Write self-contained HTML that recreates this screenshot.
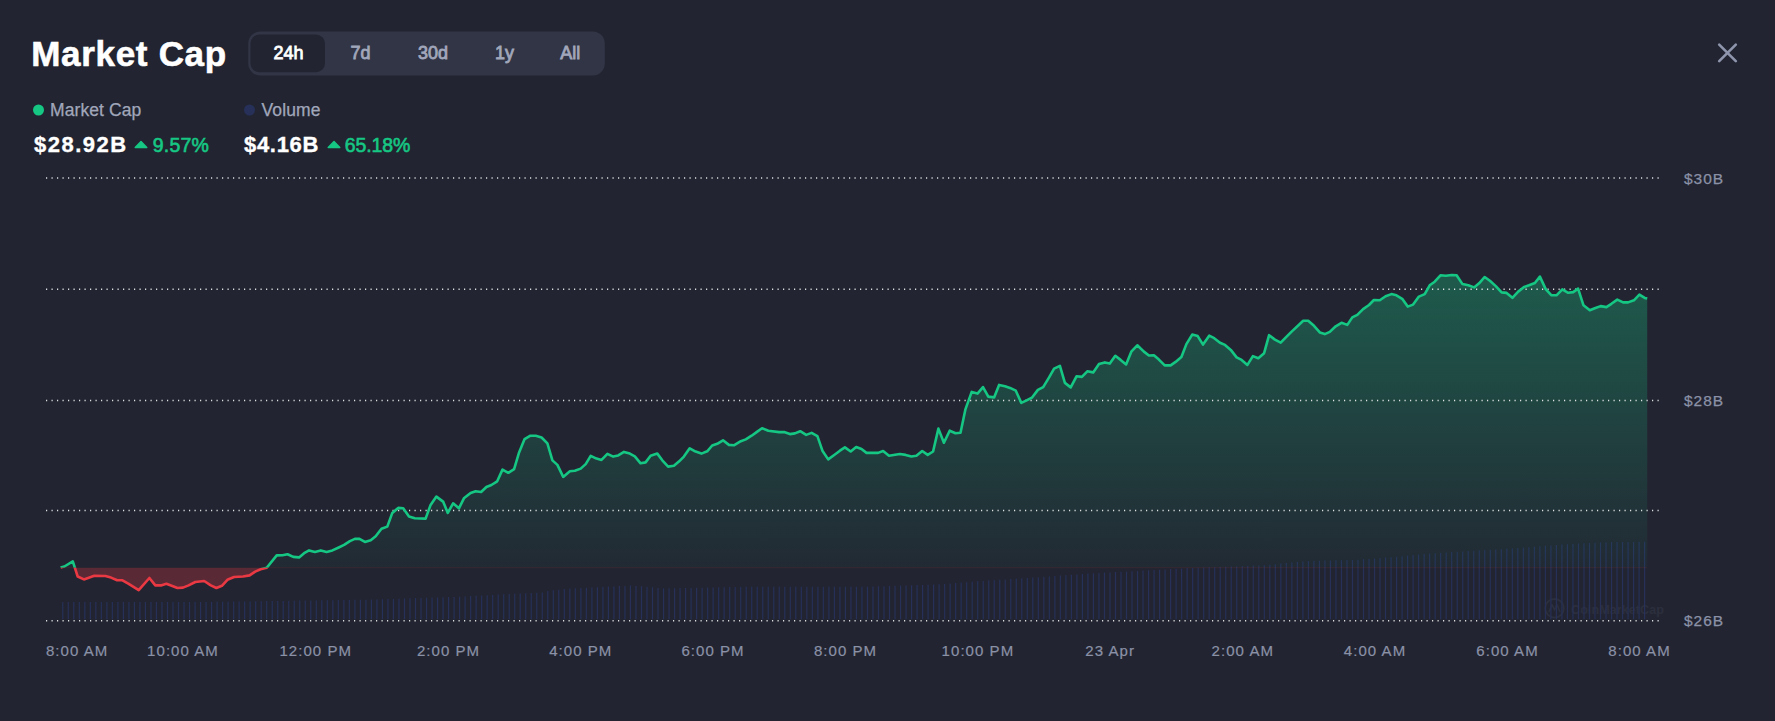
<!DOCTYPE html>
<html><head><meta charset="utf-8">
<style>
html,body{margin:0;padding:0;}
body{width:1775px;height:721px;background:#222531;position:relative;overflow:hidden;font-family:"Liberation Sans", sans-serif;}
svg{position:absolute;left:0;top:0;font-family:"Liberation Sans", sans-serif;}
</style></head><body>
<svg width="1775" height="721" viewBox="0 0 1775 721">
<defs>
<linearGradient id="gg" x1="0" y1="275" x2="0" y2="567.8" gradientUnits="userSpaceOnUse">
<stop offset="0" stop-color="#16c784" stop-opacity="0.33"/>
<stop offset="1" stop-color="#16c784" stop-opacity="0.03"/>
</linearGradient>
<clipPath id="above"><rect x="0" y="0" width="1775" height="567.8"/></clipPath>
<clipPath id="below"><rect x="0" y="567.8" width="1775" height="300"/></clipPath>
</defs>
<text x="31.2" y="66" font-size="35" font-weight="bold" fill="#fff" stroke="#fff" stroke-width="0.6" letter-spacing="0.7">Market Cap</text>
<rect x="248.3" y="31.6" width="356.5" height="44" rx="12" fill="#323546"/>
<rect x="250.4" y="34.6" width="74.6" height="37.6" rx="9" fill="#222531"/>
<g font-size="18" font-weight="normal" fill="#a1a7bb" stroke="#a1a7bb" stroke-width="0.8" text-anchor="middle">
<text x="288.6" y="59" fill="#fff" stroke="#fff">24h</text>
<text x="360.5" y="59">7d</text>
<text x="433" y="59">30d</text>
<text x="504.4" y="59">1y</text>
<text x="570.2" y="59">All</text>
</g>
<path d="M1719.2,44.6 L1735.8,61.2 M1735.8,44.6 L1719.2,61.2" stroke="#8e95ad" stroke-width="2.6" stroke-linecap="round"/>
<circle cx="38.5" cy="110" r="5.5" fill="#16c784"/>
<circle cx="249.5" cy="110" r="5.5" fill="#263058"/>
<g font-size="17.5" fill="#a1a7bb" stroke="#a1a7bb" stroke-width="0.25" letter-spacing="0.1">
<text x="50" y="115.5">Market Cap</text>
<text x="261.5" y="115.5">Volume</text>
</g>
<g font-size="22" font-weight="bold" fill="#fff" stroke="#fff" stroke-width="0.35" letter-spacing="1">
<text x="34" y="152" letter-spacing="1.5">$28.92B</text>
<text x="244" y="152" letter-spacing="0.7">$4.16B</text>
</g>
<g font-size="19.5" font-weight="normal" fill="#16c784" stroke="#16c784" stroke-width="0.6" letter-spacing="0.2">
<text x="152.8" y="152.2">9.57%</text>
<text x="344.8" y="152.2" letter-spacing="-0.1">65.18%</text>
</g>
<path d="M135.2,147.6 L141,141.4 L146.8,147.6 Z" fill="#16c784" stroke="#16c784" stroke-width="1.4" stroke-linejoin="round"/>
<path d="M328.2,147.6 L334,141.4 L339.8,147.6 Z" fill="#16c784" stroke="#16c784" stroke-width="1.4" stroke-linejoin="round"/>
<g opacity="1">
<circle cx="1554.5" cy="608.3" r="9.3" fill="none" stroke="#2c2f3d" stroke-width="1.8"/>
<path d="M1549,612 L1552,604.5 L1554.5,610 L1557,604.5 L1560,612" fill="none" stroke="#2c2f3d" stroke-width="1.6" stroke-linejoin="round"/>
<text x="1571" y="613.7" font-size="12.5" font-weight="bold" fill="#2c2f3d" letter-spacing="0.1">CoinMarketCap</text>
</g>
<path d="M62.77,619.3V602.0M68.28,619.3V602.0M73.79,619.3V602.0M79.30,619.3V602.0M84.82,619.3V602.0M90.33,619.3V602.0M95.84,619.3V602.0M101.35,619.3V602.0M106.86,619.3V602.0M112.37,619.3V602.0M117.89,619.3V602.0M123.40,619.3V602.0M128.91,619.3V602.0M134.42,619.3V602.0M139.93,619.3V602.0M145.44,619.3V602.0M150.96,619.3V602.0M156.47,619.3V602.0M161.98,619.3V602.0M167.49,619.3V602.0M173.00,619.3V602.0M178.51,619.3V602.0M184.03,619.3V602.0M189.54,619.3V602.0M195.05,619.3V602.0M200.56,619.3V602.0M206.07,619.3V602.0M211.58,619.3V601.9M217.09,619.3V601.8M222.61,619.3V601.8M228.12,619.3V601.7M233.63,619.3V601.6M239.14,619.3V601.5M244.65,619.3V601.4M250.16,619.3V601.4M255.68,619.3V601.3M261.19,619.3V601.2M266.70,619.3V601.1M272.21,619.3V601.0M277.72,619.3V601.0M283.23,619.3V600.9M288.75,619.3V600.8M294.26,619.3V600.7M299.77,619.3V600.6M305.28,619.3V600.6M310.79,619.3V600.5M316.30,619.3V600.4M321.82,619.3V600.3M327.33,619.3V600.2M332.84,619.3V600.2M338.35,619.3V600.1M343.86,619.3V600.0M349.37,619.3V599.9M354.88,619.3V599.8M360.40,619.3V599.8M365.91,619.3V599.7M371.42,619.3V599.6M376.93,619.3V599.4M382.44,619.3V599.2M387.95,619.3V599.0M393.47,619.3V598.9M398.98,619.3V598.7M404.49,619.3V598.5M410.00,619.3V598.3M415.51,619.3V598.1M421.02,619.3V597.9M426.54,619.3V597.8M432.05,619.3V597.6M437.56,619.3V597.4M443.07,619.3V597.2M448.58,619.3V597.0M454.09,619.3V596.9M459.61,619.3V596.7M465.12,619.3V596.4M470.63,619.3V596.1M476.14,619.3V595.8M481.65,619.3V595.5M487.16,619.3V595.2M492.68,619.3V594.9M498.19,619.3V594.6M503.70,619.3V594.3M509.21,619.3V594.1M514.72,619.3V593.8M520.23,619.3V593.5M525.74,619.3V593.2M531.26,619.3V593.0M536.77,619.3V592.7M542.28,619.3V592.4M547.79,619.3V590.9M553.30,619.3V590.3M558.81,619.3V589.7M564.33,619.3V589.1M569.84,619.3V588.5M575.35,619.3V588.2M580.86,619.3V587.9M586.37,619.3V587.7M591.88,619.3V587.4M597.40,619.3V587.2M602.91,619.3V586.9M608.42,619.3V586.6M613.93,619.3V586.4M619.44,619.3V586.1M624.95,619.3V585.9M630.47,619.3V585.6M635.98,619.3V586.0M641.49,619.3V586.3M647.00,619.3V586.8M652.51,619.3V587.3M658.02,619.3V587.9M663.53,619.3V588.4M669.05,619.3V588.3M674.56,619.3V588.2M680.07,619.3V588.1M685.58,619.3V588.0M691.09,619.3V587.9M696.60,619.3V587.8M702.12,619.3V587.7M707.63,619.3V587.5M713.14,619.3V587.4M718.65,619.3V587.3M724.16,619.3V587.2M729.67,619.3V587.1M735.19,619.3V587.0M740.70,619.3V586.9M746.21,619.3V586.8M751.72,619.3V586.7M757.23,619.3V586.7M762.74,619.3V586.7M768.26,619.3V586.7M773.77,619.3V586.7M779.28,619.3V586.7M784.79,619.3V586.7M790.30,619.3V586.7M795.81,619.3V586.7M801.32,619.3V586.7M806.84,619.3V586.7M812.35,619.3V586.7M817.86,619.3V586.7M823.37,619.3V586.7M828.88,619.3V586.7M834.39,619.3V586.7M839.91,619.3V586.7M845.42,619.3V586.7M850.93,619.3V586.7M856.44,619.3V586.7M861.95,619.3V586.7M867.46,619.3V586.7M872.98,619.3V586.5M878.49,619.3V586.3M884.00,619.3V586.2M889.51,619.3V586.0M895.02,619.3V585.8M900.53,619.3V585.6M906.05,619.3V585.4M911.56,619.3V585.3M917.07,619.3V585.1M922.58,619.3V584.9M928.09,619.3V584.7M933.60,619.3V584.5M939.11,619.3V584.3M944.63,619.3V583.9M950.14,619.3V583.5M955.65,619.3V583.0M961.16,619.3V582.6M966.67,619.3V582.2M972.18,619.3V581.8M977.70,619.3V581.3M983.21,619.3V580.9M988.72,619.3V580.6M994.23,619.3V580.2M999.74,619.3V579.8M1005.25,619.3V579.4M1010.77,619.3V579.1M1016.28,619.3V578.7M1021.79,619.3V578.3M1027.30,619.3V577.9M1032.81,619.3V577.5M1038.32,619.3V577.2M1043.84,619.3V576.8M1049.35,619.3V576.4M1054.86,619.3V576.0M1060.37,619.3V575.6M1065.88,619.3V575.2M1071.39,619.3V574.8M1076.90,619.3V574.4M1082.42,619.3V574.0M1087.93,619.3V573.6M1093.44,619.3V573.2M1098.95,619.3V572.9M1104.46,619.3V572.6M1109.97,619.3V572.4M1115.49,619.3V572.1M1121.00,619.3V571.8M1126.51,619.3V571.5M1132.02,619.3V571.2M1137.53,619.3V570.9M1143.04,619.3V570.6M1148.56,619.3V570.3M1154.07,619.3V570.0M1159.58,619.3V569.7M1165.09,619.3V569.4M1170.60,619.3V569.1M1176.11,619.3V568.8M1181.63,619.3V568.4M1187.14,619.3V568.1M1192.65,619.3V567.9M1198.16,619.3V567.7M1203.67,619.3V567.5M1209.18,619.3V567.3M1214.69,619.3V567.2M1220.21,619.3V567.0M1225.72,619.3V566.8M1231.23,619.3V566.6M1236.74,619.3V566.4M1242.25,619.3V566.1M1247.76,619.3V565.9M1253.28,619.3V565.6M1258.79,619.3V565.4M1264.30,619.3V565.2M1269.81,619.3V564.8M1275.32,619.3V564.2M1280.83,619.3V563.6M1286.35,619.3V563.1M1291.86,619.3V562.5M1297.37,619.3V562.0M1302.88,619.3V561.4M1308.39,619.3V561.0M1313.90,619.3V560.8M1319.42,619.3V560.7M1324.93,619.3V560.6M1330.44,619.3V560.4M1335.95,619.3V560.3M1341.46,619.3V560.2M1346.97,619.3V560.0M1352.49,619.3V559.9M1358.00,619.3V559.7M1363.51,619.3V559.3M1369.02,619.3V558.9M1374.53,619.3V558.4M1380.04,619.3V558.0M1385.55,619.3V557.6M1391.07,619.3V557.2M1396.58,619.3V556.7M1402.09,619.3V556.2M1407.60,619.3V555.6M1413.11,619.3V555.1M1418.62,619.3V554.5M1424.14,619.3V553.9M1429.65,619.3V553.5M1435.16,619.3V553.2M1440.67,619.3V552.8M1446.18,619.3V552.5M1451.69,619.3V552.1M1457.21,619.3V551.8M1462.72,619.3V551.4M1468.23,619.3V551.1M1473.74,619.3V550.7M1479.25,619.3V550.3M1484.76,619.3V550.0M1490.28,619.3V549.7M1495.79,619.3V549.4M1501.30,619.3V549.2M1506.81,619.3V548.8M1512.32,619.3V548.4M1517.83,619.3V548.0M1523.34,619.3V547.6M1528.86,619.3V547.2M1534.37,619.3V546.7M1539.88,619.3V546.3M1545.39,619.3V545.8M1550.90,619.3V545.4M1556.41,619.3V544.9M1561.93,619.3V544.5M1567.44,619.3V544.2M1572.95,619.3V543.9M1578.46,619.3V543.6M1583.97,619.3V543.3M1589.48,619.3V543.0M1595.00,619.3V542.8M1600.51,619.3V542.5M1606.02,619.3V542.2M1611.53,619.3V542.0M1617.04,619.3V542.0M1622.55,619.3V541.9M1628.07,619.3V541.9M1633.58,619.3V541.9M1639.09,619.3V541.8M1644.60,619.3V541.8" stroke="#263058" stroke-width="1.2" fill="none"/>
<path d="M60.6,567.6 L64.4,566.5 L72.8,561.4 L77.7,576.5 L83.9,579.4 L94.3,575.8 L105.4,576.0 L111.0,577.6 L117.2,580.3 L122.5,580.3 L128.7,583.8 L138.7,590.2 L149.4,578.0 L155.3,585.4 L160.9,585.4 L166.4,583.8 L177.5,588.0 L183.0,587.6 L188.6,585.4 L195.3,582.0 L204.2,581.0 L210.8,585.4 L216.4,588.0 L221.9,585.8 L227.4,579.8 L234.1,577.0 L243.0,576.5 L249.6,575.4 L255.2,571.6 L260.7,569.2 L266.7,567.8 L276.7,555.4 L282.5,555.2 L287.5,554.2 L293.3,556.9 L299.1,557.4 L304.1,553.2 L309.1,550.4 L314.9,551.9 L320.8,550.4 L326.6,551.9 L332.4,550.4 L338.2,547.7 L344.1,544.9 L349.9,541.1 L354.9,538.9 L359.0,538.7 L364.9,541.9 L370.7,540.2 L375.7,536.2 L381.5,528.7 L387.3,526.6 L392.3,512.9 L398.2,507.9 L403.2,508.3 L409.0,516.6 L414.8,518.3 L425.6,518.6 L430.6,504.9 L436.4,496.6 L443.1,501.6 L447.8,512.9 L453.1,503.3 L458.9,508.3 L463.9,498.3 L470.6,493.0 L475.6,491.3 L481.1,492.0 L486.4,487.0 L491.4,485.0 L497.2,481.3 L502.5,469.6 L508.3,472.8 L514.1,469.1 L519.1,452.4 L524.6,439.1 L530.0,435.8 L535.8,435.8 L541.6,437.5 L547.4,443.3 L552.4,460.4 L557.4,464.9 L563.2,476.9 L569.9,471.3 L574.9,470.8 L580.7,468.6 L585.7,464.1 L590.7,455.8 L596.5,458.6 L601.5,459.9 L607.4,453.8 L613.2,456.6 L618.2,455.4 L624.0,451.9 L629.8,453.6 L634.8,456.3 L640.6,463.3 L645.6,462.4 L650.6,455.8 L657.3,453.6 L662.3,460.3 L668.1,466.6 L673.9,465.8 L678.9,461.6 L683.9,456.6 L689.7,448.3 L695.6,451.6 L701.4,453.6 L707.2,451.3 L712.2,445.5 L717.2,443.8 L723.0,440.3 L728.9,444.9 L733.9,445.3 L740.8,441.2 L745.8,439.4 L751.6,435.7 L756.6,432.1 L762.0,428.2 L768.3,430.7 L779.1,432.1 L784.1,432.1 L789.9,434.1 L794.9,433.4 L800.2,431.2 L806.2,434.9 L811.6,432.9 L817.4,436.1 L822.4,450.7 L828.2,459.4 L834.9,454.5 L839.9,450.7 L844.9,447.4 L850.7,451.5 L856.2,447.0 L861.5,449.0 L866.5,452.9 L878.1,452.9 L883.1,451.0 L889.0,455.7 L899.8,454.0 L905.6,454.9 L911.4,456.5 L916.4,455.7 L922.2,451.0 L927.7,454.9 L933.1,451.5 L938.4,428.6 L943.9,442.7 L949.7,430.7 L955.5,433.2 L960.5,432.7 L965.5,409.1 L971.7,391.9 L977.5,393.6 L983.0,387.1 L988.3,396.6 L994.1,397.4 L999.1,384.9 L1005.0,386.2 L1010.0,387.9 L1015.8,390.7 L1021.3,402.9 L1026.6,400.4 L1031.9,397.7 L1037.9,389.9 L1043.2,387.1 L1049.1,377.4 L1054.1,368.6 L1059.9,365.9 L1064.9,382.9 L1070.7,387.4 L1076.5,376.3 L1081.9,376.9 L1087.3,371.3 L1093.2,372.4 L1099.0,364.1 L1104.8,362.4 L1109.8,363.6 L1115.3,355.8 L1120.6,359.9 L1126.1,364.4 L1131.5,351.3 L1137.3,345.3 L1143.9,351.6 L1148.9,355.5 L1153.9,355.3 L1158.9,359.6 L1164.7,365.4 L1170.6,365.4 L1175.6,361.9 L1181.4,357.0 L1186.4,344.1 L1192.2,334.6 L1197.7,336.1 L1203.0,344.6 L1209.2,335.7 L1214.2,338.2 L1220.0,342.7 L1225.0,344.9 L1230.8,349.9 L1236.6,357.4 L1241.6,359.9 L1247.4,364.9 L1252.9,356.1 L1258.3,358.2 L1264.1,353.2 L1269.1,335.2 L1274.9,339.6 L1280.7,342.7 L1286.6,336.6 L1291.6,331.6 L1297.4,326.3 L1303.2,320.8 L1308.2,320.8 L1314.0,325.8 L1319.8,332.4 L1324.8,334.1 L1329.8,331.9 L1335.7,326.3 L1341.5,322.8 L1347.3,324.9 L1352.3,317.4 L1357.3,314.9 L1363.1,309.1 L1369.0,305.0 L1373.9,300.0 L1379.8,300.3 L1385.6,296.3 L1391.4,294.1 L1396.4,295.3 L1402.2,298.8 L1407.7,306.6 L1413.1,304.6 L1418.9,296.6 L1424.7,294.1 L1429.7,285.3 L1434.7,281.7 L1440.5,275.3 L1445.8,275.8 L1451.7,275.0 L1456.6,275.3 L1462.5,284.1 L1468.3,285.3 L1474.1,287.4 L1479.1,283.3 L1484.6,277.0 L1489.9,280.8 L1495.8,286.1 L1501.6,292.4 L1506.6,292.9 L1512.4,297.8 L1518.2,291.6 L1524.1,287.0 L1529.0,285.3 L1534.9,283.0 L1539.9,276.6 L1545.7,289.1 L1551.5,295.3 L1556.5,295.3 L1562.3,289.4 L1568.2,292.8 L1573.2,292.1 L1578.1,288.6 L1583.5,305.3 L1589.8,310.3 L1594.8,308.3 L1600.6,306.1 L1606.4,307.1 L1611.4,303.8 L1617.3,299.6 L1623.1,302.4 L1628.1,302.4 L1633.9,300.3 L1639.4,294.6 L1644.7,297.9 L1647.2,298.6 L1647.2,567.8 L60.6,567.8 Z" fill="url(#gg)" clip-path="url(#above)"/>
<path d="M60.6,567.6 L64.4,566.5 L72.8,561.4 L77.7,576.5 L83.9,579.4 L94.3,575.8 L105.4,576.0 L111.0,577.6 L117.2,580.3 L122.5,580.3 L128.7,583.8 L138.7,590.2 L149.4,578.0 L155.3,585.4 L160.9,585.4 L166.4,583.8 L177.5,588.0 L183.0,587.6 L188.6,585.4 L195.3,582.0 L204.2,581.0 L210.8,585.4 L216.4,588.0 L221.9,585.8 L227.4,579.8 L234.1,577.0 L243.0,576.5 L249.6,575.4 L255.2,571.6 L260.7,569.2 L266.7,567.8 L276.7,555.4 L282.5,555.2 L287.5,554.2 L293.3,556.9 L299.1,557.4 L304.1,553.2 L309.1,550.4 L314.9,551.9 L320.8,550.4 L326.6,551.9 L332.4,550.4 L338.2,547.7 L344.1,544.9 L349.9,541.1 L354.9,538.9 L359.0,538.7 L364.9,541.9 L370.7,540.2 L375.7,536.2 L381.5,528.7 L387.3,526.6 L392.3,512.9 L398.2,507.9 L403.2,508.3 L409.0,516.6 L414.8,518.3 L425.6,518.6 L430.6,504.9 L436.4,496.6 L443.1,501.6 L447.8,512.9 L453.1,503.3 L458.9,508.3 L463.9,498.3 L470.6,493.0 L475.6,491.3 L481.1,492.0 L486.4,487.0 L491.4,485.0 L497.2,481.3 L502.5,469.6 L508.3,472.8 L514.1,469.1 L519.1,452.4 L524.6,439.1 L530.0,435.8 L535.8,435.8 L541.6,437.5 L547.4,443.3 L552.4,460.4 L557.4,464.9 L563.2,476.9 L569.9,471.3 L574.9,470.8 L580.7,468.6 L585.7,464.1 L590.7,455.8 L596.5,458.6 L601.5,459.9 L607.4,453.8 L613.2,456.6 L618.2,455.4 L624.0,451.9 L629.8,453.6 L634.8,456.3 L640.6,463.3 L645.6,462.4 L650.6,455.8 L657.3,453.6 L662.3,460.3 L668.1,466.6 L673.9,465.8 L678.9,461.6 L683.9,456.6 L689.7,448.3 L695.6,451.6 L701.4,453.6 L707.2,451.3 L712.2,445.5 L717.2,443.8 L723.0,440.3 L728.9,444.9 L733.9,445.3 L740.8,441.2 L745.8,439.4 L751.6,435.7 L756.6,432.1 L762.0,428.2 L768.3,430.7 L779.1,432.1 L784.1,432.1 L789.9,434.1 L794.9,433.4 L800.2,431.2 L806.2,434.9 L811.6,432.9 L817.4,436.1 L822.4,450.7 L828.2,459.4 L834.9,454.5 L839.9,450.7 L844.9,447.4 L850.7,451.5 L856.2,447.0 L861.5,449.0 L866.5,452.9 L878.1,452.9 L883.1,451.0 L889.0,455.7 L899.8,454.0 L905.6,454.9 L911.4,456.5 L916.4,455.7 L922.2,451.0 L927.7,454.9 L933.1,451.5 L938.4,428.6 L943.9,442.7 L949.7,430.7 L955.5,433.2 L960.5,432.7 L965.5,409.1 L971.7,391.9 L977.5,393.6 L983.0,387.1 L988.3,396.6 L994.1,397.4 L999.1,384.9 L1005.0,386.2 L1010.0,387.9 L1015.8,390.7 L1021.3,402.9 L1026.6,400.4 L1031.9,397.7 L1037.9,389.9 L1043.2,387.1 L1049.1,377.4 L1054.1,368.6 L1059.9,365.9 L1064.9,382.9 L1070.7,387.4 L1076.5,376.3 L1081.9,376.9 L1087.3,371.3 L1093.2,372.4 L1099.0,364.1 L1104.8,362.4 L1109.8,363.6 L1115.3,355.8 L1120.6,359.9 L1126.1,364.4 L1131.5,351.3 L1137.3,345.3 L1143.9,351.6 L1148.9,355.5 L1153.9,355.3 L1158.9,359.6 L1164.7,365.4 L1170.6,365.4 L1175.6,361.9 L1181.4,357.0 L1186.4,344.1 L1192.2,334.6 L1197.7,336.1 L1203.0,344.6 L1209.2,335.7 L1214.2,338.2 L1220.0,342.7 L1225.0,344.9 L1230.8,349.9 L1236.6,357.4 L1241.6,359.9 L1247.4,364.9 L1252.9,356.1 L1258.3,358.2 L1264.1,353.2 L1269.1,335.2 L1274.9,339.6 L1280.7,342.7 L1286.6,336.6 L1291.6,331.6 L1297.4,326.3 L1303.2,320.8 L1308.2,320.8 L1314.0,325.8 L1319.8,332.4 L1324.8,334.1 L1329.8,331.9 L1335.7,326.3 L1341.5,322.8 L1347.3,324.9 L1352.3,317.4 L1357.3,314.9 L1363.1,309.1 L1369.0,305.0 L1373.9,300.0 L1379.8,300.3 L1385.6,296.3 L1391.4,294.1 L1396.4,295.3 L1402.2,298.8 L1407.7,306.6 L1413.1,304.6 L1418.9,296.6 L1424.7,294.1 L1429.7,285.3 L1434.7,281.7 L1440.5,275.3 L1445.8,275.8 L1451.7,275.0 L1456.6,275.3 L1462.5,284.1 L1468.3,285.3 L1474.1,287.4 L1479.1,283.3 L1484.6,277.0 L1489.9,280.8 L1495.8,286.1 L1501.6,292.4 L1506.6,292.9 L1512.4,297.8 L1518.2,291.6 L1524.1,287.0 L1529.0,285.3 L1534.9,283.0 L1539.9,276.6 L1545.7,289.1 L1551.5,295.3 L1556.5,295.3 L1562.3,289.4 L1568.2,292.8 L1573.2,292.1 L1578.1,288.6 L1583.5,305.3 L1589.8,310.3 L1594.8,308.3 L1600.6,306.1 L1606.4,307.1 L1611.4,303.8 L1617.3,299.6 L1623.1,302.4 L1628.1,302.4 L1633.9,300.3 L1639.4,294.6 L1644.7,297.9 L1647.2,298.6 L1647.2,567.8 L60.6,567.8 Z" fill="#ea3943" fill-opacity="0.28" clip-path="url(#below)"/>
<g stroke="#ffffff" stroke-opacity="0.85" stroke-width="1.4" stroke-dasharray="1.2 4.3" fill="none"><line x1="46" y1="178.0" x2="1660" y2="178.0"/><line x1="46" y1="289.2" x2="1660" y2="289.2"/><line x1="46" y1="400.5" x2="1660" y2="400.5"/><line x1="46" y1="510.5" x2="1660" y2="510.5"/><line x1="46" y1="620.8" x2="1660" y2="620.8"/></g>
<line x1="60.6" y1="567.8" x2="1647.2" y2="567.8" stroke="#ea3943" stroke-opacity="0.06" stroke-width="1"/>
<path d="M60.6,567.6 L64.4,566.5 L72.8,561.4 L77.7,576.5 L83.9,579.4 L94.3,575.8 L105.4,576.0 L111.0,577.6 L117.2,580.3 L122.5,580.3 L128.7,583.8 L138.7,590.2 L149.4,578.0 L155.3,585.4 L160.9,585.4 L166.4,583.8 L177.5,588.0 L183.0,587.6 L188.6,585.4 L195.3,582.0 L204.2,581.0 L210.8,585.4 L216.4,588.0 L221.9,585.8 L227.4,579.8 L234.1,577.0 L243.0,576.5 L249.6,575.4 L255.2,571.6 L260.7,569.2 L266.7,567.8 L276.7,555.4 L282.5,555.2 L287.5,554.2 L293.3,556.9 L299.1,557.4 L304.1,553.2 L309.1,550.4 L314.9,551.9 L320.8,550.4 L326.6,551.9 L332.4,550.4 L338.2,547.7 L344.1,544.9 L349.9,541.1 L354.9,538.9 L359.0,538.7 L364.9,541.9 L370.7,540.2 L375.7,536.2 L381.5,528.7 L387.3,526.6 L392.3,512.9 L398.2,507.9 L403.2,508.3 L409.0,516.6 L414.8,518.3 L425.6,518.6 L430.6,504.9 L436.4,496.6 L443.1,501.6 L447.8,512.9 L453.1,503.3 L458.9,508.3 L463.9,498.3 L470.6,493.0 L475.6,491.3 L481.1,492.0 L486.4,487.0 L491.4,485.0 L497.2,481.3 L502.5,469.6 L508.3,472.8 L514.1,469.1 L519.1,452.4 L524.6,439.1 L530.0,435.8 L535.8,435.8 L541.6,437.5 L547.4,443.3 L552.4,460.4 L557.4,464.9 L563.2,476.9 L569.9,471.3 L574.9,470.8 L580.7,468.6 L585.7,464.1 L590.7,455.8 L596.5,458.6 L601.5,459.9 L607.4,453.8 L613.2,456.6 L618.2,455.4 L624.0,451.9 L629.8,453.6 L634.8,456.3 L640.6,463.3 L645.6,462.4 L650.6,455.8 L657.3,453.6 L662.3,460.3 L668.1,466.6 L673.9,465.8 L678.9,461.6 L683.9,456.6 L689.7,448.3 L695.6,451.6 L701.4,453.6 L707.2,451.3 L712.2,445.5 L717.2,443.8 L723.0,440.3 L728.9,444.9 L733.9,445.3 L740.8,441.2 L745.8,439.4 L751.6,435.7 L756.6,432.1 L762.0,428.2 L768.3,430.7 L779.1,432.1 L784.1,432.1 L789.9,434.1 L794.9,433.4 L800.2,431.2 L806.2,434.9 L811.6,432.9 L817.4,436.1 L822.4,450.7 L828.2,459.4 L834.9,454.5 L839.9,450.7 L844.9,447.4 L850.7,451.5 L856.2,447.0 L861.5,449.0 L866.5,452.9 L878.1,452.9 L883.1,451.0 L889.0,455.7 L899.8,454.0 L905.6,454.9 L911.4,456.5 L916.4,455.7 L922.2,451.0 L927.7,454.9 L933.1,451.5 L938.4,428.6 L943.9,442.7 L949.7,430.7 L955.5,433.2 L960.5,432.7 L965.5,409.1 L971.7,391.9 L977.5,393.6 L983.0,387.1 L988.3,396.6 L994.1,397.4 L999.1,384.9 L1005.0,386.2 L1010.0,387.9 L1015.8,390.7 L1021.3,402.9 L1026.6,400.4 L1031.9,397.7 L1037.9,389.9 L1043.2,387.1 L1049.1,377.4 L1054.1,368.6 L1059.9,365.9 L1064.9,382.9 L1070.7,387.4 L1076.5,376.3 L1081.9,376.9 L1087.3,371.3 L1093.2,372.4 L1099.0,364.1 L1104.8,362.4 L1109.8,363.6 L1115.3,355.8 L1120.6,359.9 L1126.1,364.4 L1131.5,351.3 L1137.3,345.3 L1143.9,351.6 L1148.9,355.5 L1153.9,355.3 L1158.9,359.6 L1164.7,365.4 L1170.6,365.4 L1175.6,361.9 L1181.4,357.0 L1186.4,344.1 L1192.2,334.6 L1197.7,336.1 L1203.0,344.6 L1209.2,335.7 L1214.2,338.2 L1220.0,342.7 L1225.0,344.9 L1230.8,349.9 L1236.6,357.4 L1241.6,359.9 L1247.4,364.9 L1252.9,356.1 L1258.3,358.2 L1264.1,353.2 L1269.1,335.2 L1274.9,339.6 L1280.7,342.7 L1286.6,336.6 L1291.6,331.6 L1297.4,326.3 L1303.2,320.8 L1308.2,320.8 L1314.0,325.8 L1319.8,332.4 L1324.8,334.1 L1329.8,331.9 L1335.7,326.3 L1341.5,322.8 L1347.3,324.9 L1352.3,317.4 L1357.3,314.9 L1363.1,309.1 L1369.0,305.0 L1373.9,300.0 L1379.8,300.3 L1385.6,296.3 L1391.4,294.1 L1396.4,295.3 L1402.2,298.8 L1407.7,306.6 L1413.1,304.6 L1418.9,296.6 L1424.7,294.1 L1429.7,285.3 L1434.7,281.7 L1440.5,275.3 L1445.8,275.8 L1451.7,275.0 L1456.6,275.3 L1462.5,284.1 L1468.3,285.3 L1474.1,287.4 L1479.1,283.3 L1484.6,277.0 L1489.9,280.8 L1495.8,286.1 L1501.6,292.4 L1506.6,292.9 L1512.4,297.8 L1518.2,291.6 L1524.1,287.0 L1529.0,285.3 L1534.9,283.0 L1539.9,276.6 L1545.7,289.1 L1551.5,295.3 L1556.5,295.3 L1562.3,289.4 L1568.2,292.8 L1573.2,292.1 L1578.1,288.6 L1583.5,305.3 L1589.8,310.3 L1594.8,308.3 L1600.6,306.1 L1606.4,307.1 L1611.4,303.8 L1617.3,299.6 L1623.1,302.4 L1628.1,302.4 L1633.9,300.3 L1639.4,294.6 L1644.7,297.9 L1647.2,298.6" stroke="#16c784" stroke-width="2.6" fill="none" stroke-linejoin="round" clip-path="url(#above)"/>
<path d="M60.6,567.6 L64.4,566.5 L72.8,561.4 L77.7,576.5 L83.9,579.4 L94.3,575.8 L105.4,576.0 L111.0,577.6 L117.2,580.3 L122.5,580.3 L128.7,583.8 L138.7,590.2 L149.4,578.0 L155.3,585.4 L160.9,585.4 L166.4,583.8 L177.5,588.0 L183.0,587.6 L188.6,585.4 L195.3,582.0 L204.2,581.0 L210.8,585.4 L216.4,588.0 L221.9,585.8 L227.4,579.8 L234.1,577.0 L243.0,576.5 L249.6,575.4 L255.2,571.6 L260.7,569.2 L266.7,567.8 L276.7,555.4 L282.5,555.2 L287.5,554.2 L293.3,556.9 L299.1,557.4 L304.1,553.2 L309.1,550.4 L314.9,551.9 L320.8,550.4 L326.6,551.9 L332.4,550.4 L338.2,547.7 L344.1,544.9 L349.9,541.1 L354.9,538.9 L359.0,538.7 L364.9,541.9 L370.7,540.2 L375.7,536.2 L381.5,528.7 L387.3,526.6 L392.3,512.9 L398.2,507.9 L403.2,508.3 L409.0,516.6 L414.8,518.3 L425.6,518.6 L430.6,504.9 L436.4,496.6 L443.1,501.6 L447.8,512.9 L453.1,503.3 L458.9,508.3 L463.9,498.3 L470.6,493.0 L475.6,491.3 L481.1,492.0 L486.4,487.0 L491.4,485.0 L497.2,481.3 L502.5,469.6 L508.3,472.8 L514.1,469.1 L519.1,452.4 L524.6,439.1 L530.0,435.8 L535.8,435.8 L541.6,437.5 L547.4,443.3 L552.4,460.4 L557.4,464.9 L563.2,476.9 L569.9,471.3 L574.9,470.8 L580.7,468.6 L585.7,464.1 L590.7,455.8 L596.5,458.6 L601.5,459.9 L607.4,453.8 L613.2,456.6 L618.2,455.4 L624.0,451.9 L629.8,453.6 L634.8,456.3 L640.6,463.3 L645.6,462.4 L650.6,455.8 L657.3,453.6 L662.3,460.3 L668.1,466.6 L673.9,465.8 L678.9,461.6 L683.9,456.6 L689.7,448.3 L695.6,451.6 L701.4,453.6 L707.2,451.3 L712.2,445.5 L717.2,443.8 L723.0,440.3 L728.9,444.9 L733.9,445.3 L740.8,441.2 L745.8,439.4 L751.6,435.7 L756.6,432.1 L762.0,428.2 L768.3,430.7 L779.1,432.1 L784.1,432.1 L789.9,434.1 L794.9,433.4 L800.2,431.2 L806.2,434.9 L811.6,432.9 L817.4,436.1 L822.4,450.7 L828.2,459.4 L834.9,454.5 L839.9,450.7 L844.9,447.4 L850.7,451.5 L856.2,447.0 L861.5,449.0 L866.5,452.9 L878.1,452.9 L883.1,451.0 L889.0,455.7 L899.8,454.0 L905.6,454.9 L911.4,456.5 L916.4,455.7 L922.2,451.0 L927.7,454.9 L933.1,451.5 L938.4,428.6 L943.9,442.7 L949.7,430.7 L955.5,433.2 L960.5,432.7 L965.5,409.1 L971.7,391.9 L977.5,393.6 L983.0,387.1 L988.3,396.6 L994.1,397.4 L999.1,384.9 L1005.0,386.2 L1010.0,387.9 L1015.8,390.7 L1021.3,402.9 L1026.6,400.4 L1031.9,397.7 L1037.9,389.9 L1043.2,387.1 L1049.1,377.4 L1054.1,368.6 L1059.9,365.9 L1064.9,382.9 L1070.7,387.4 L1076.5,376.3 L1081.9,376.9 L1087.3,371.3 L1093.2,372.4 L1099.0,364.1 L1104.8,362.4 L1109.8,363.6 L1115.3,355.8 L1120.6,359.9 L1126.1,364.4 L1131.5,351.3 L1137.3,345.3 L1143.9,351.6 L1148.9,355.5 L1153.9,355.3 L1158.9,359.6 L1164.7,365.4 L1170.6,365.4 L1175.6,361.9 L1181.4,357.0 L1186.4,344.1 L1192.2,334.6 L1197.7,336.1 L1203.0,344.6 L1209.2,335.7 L1214.2,338.2 L1220.0,342.7 L1225.0,344.9 L1230.8,349.9 L1236.6,357.4 L1241.6,359.9 L1247.4,364.9 L1252.9,356.1 L1258.3,358.2 L1264.1,353.2 L1269.1,335.2 L1274.9,339.6 L1280.7,342.7 L1286.6,336.6 L1291.6,331.6 L1297.4,326.3 L1303.2,320.8 L1308.2,320.8 L1314.0,325.8 L1319.8,332.4 L1324.8,334.1 L1329.8,331.9 L1335.7,326.3 L1341.5,322.8 L1347.3,324.9 L1352.3,317.4 L1357.3,314.9 L1363.1,309.1 L1369.0,305.0 L1373.9,300.0 L1379.8,300.3 L1385.6,296.3 L1391.4,294.1 L1396.4,295.3 L1402.2,298.8 L1407.7,306.6 L1413.1,304.6 L1418.9,296.6 L1424.7,294.1 L1429.7,285.3 L1434.7,281.7 L1440.5,275.3 L1445.8,275.8 L1451.7,275.0 L1456.6,275.3 L1462.5,284.1 L1468.3,285.3 L1474.1,287.4 L1479.1,283.3 L1484.6,277.0 L1489.9,280.8 L1495.8,286.1 L1501.6,292.4 L1506.6,292.9 L1512.4,297.8 L1518.2,291.6 L1524.1,287.0 L1529.0,285.3 L1534.9,283.0 L1539.9,276.6 L1545.7,289.1 L1551.5,295.3 L1556.5,295.3 L1562.3,289.4 L1568.2,292.8 L1573.2,292.1 L1578.1,288.6 L1583.5,305.3 L1589.8,310.3 L1594.8,308.3 L1600.6,306.1 L1606.4,307.1 L1611.4,303.8 L1617.3,299.6 L1623.1,302.4 L1628.1,302.4 L1633.9,300.3 L1639.4,294.6 L1644.7,297.9 L1647.2,298.6" stroke="#ea3943" stroke-width="2.6" fill="none" stroke-linejoin="round" clip-path="url(#below)"/>
<g font-size="15" fill="#8b91a7" stroke="#8b91a7" stroke-width="0.2" text-anchor="middle" letter-spacing="1.05"><text x="77.1" y="656">8:00 AM</text><text x="183.0" y="656">10:00 AM</text><text x="315.7" y="656">12:00 PM</text><text x="448.5" y="656">2:00 PM</text><text x="580.8" y="656">4:00 PM</text><text x="713.0" y="656">6:00 PM</text><text x="845.5" y="656">8:00 PM</text><text x="977.9" y="656">10:00 PM</text><text x="1110.2" y="656">23 Apr</text><text x="1242.8" y="656">2:00 AM</text><text x="1375.0" y="656">4:00 AM</text><text x="1507.5" y="656">6:00 AM</text><text x="1639.5" y="656">8:00 AM</text></g>
<g font-size="15.5" fill="#8b91a7" stroke="#8b91a7" stroke-width="0.25" letter-spacing="1.0">$
<text x="1684" y="183.8">$30B</text><text x="1684" y="405.8">$28B</text><text x="1684" y="625.8">$26B</text>
</g>
</svg>
</body></html>
